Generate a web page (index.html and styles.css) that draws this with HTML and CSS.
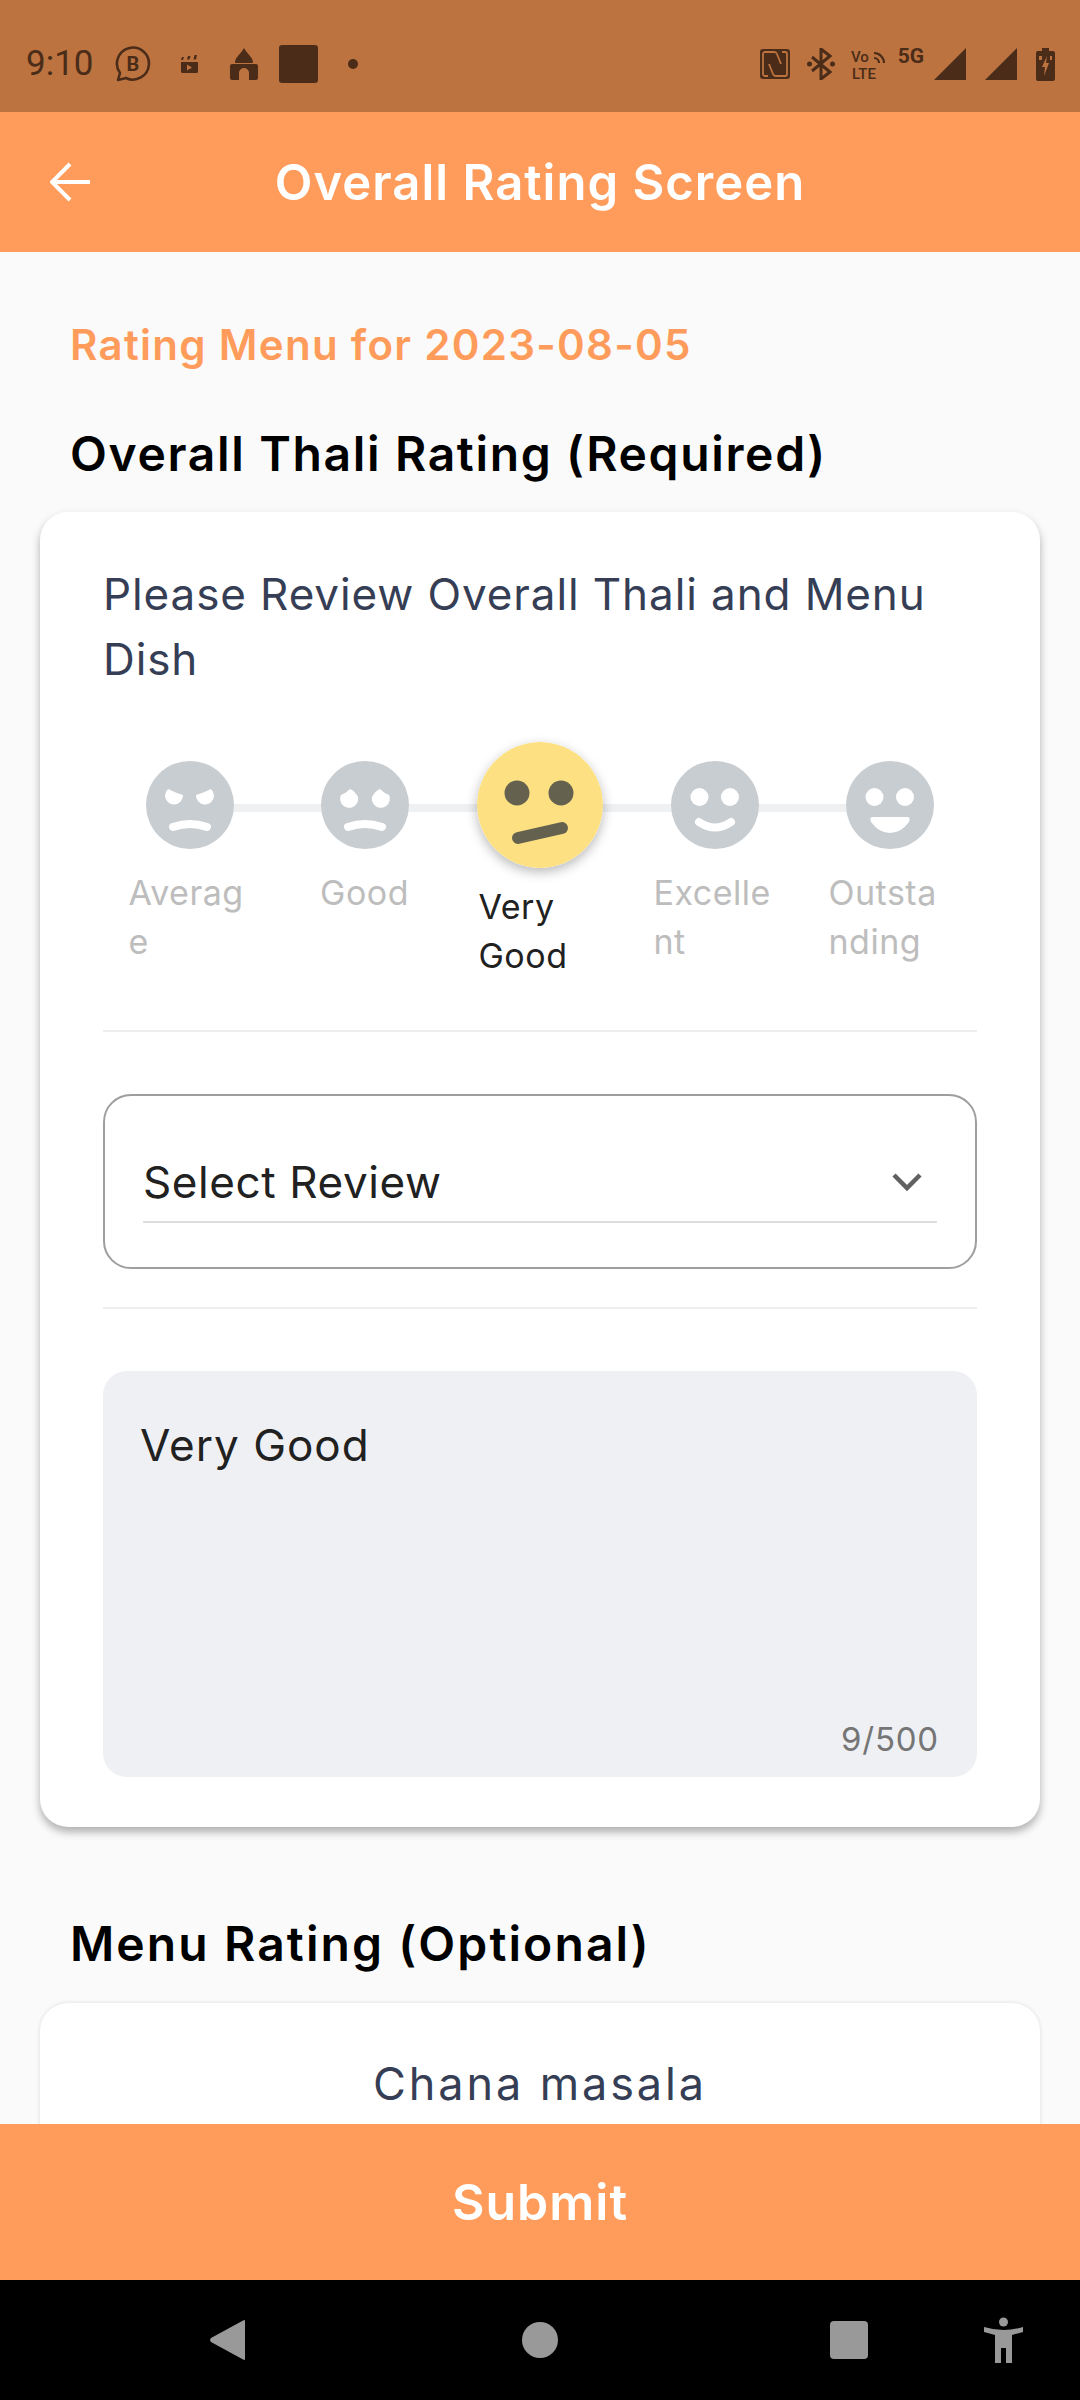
FILE: index.html
```html
<!DOCTYPE html>
<html lang="en">
  <head>
    <meta charset="UTF-8" />
    <meta name="viewport" content="width=device-width, initial-scale=1.0" />
    <title>Overall Rating Screen</title>
    <link rel="stylesheet" href="styles.css">
  </head>
  <body>
    <div class="status-bar">
      <div class="status-left">
        <span class="status-time">9:10</span>
        <svg class="ic-biz" viewBox="0 0 36 36">
          <path d="M3 34l2-7a16 16 0 1 1 6 5z" fill="none" stroke="#4b2c18" stroke-width="2.6" stroke-linejoin="round" />
          <text x="18" y="25" text-anchor="middle" class="ic-biz-text">B</text>
        </svg>
        <svg class="ic-clap" viewBox="0 0 18 18">
          <path d="M1 7h17v9.500a1.500 1.500 0 0 1-1.500 1.500h-14A1.500 1.500 0 0 1 1 16.500z" fill="#4b2c18" />
          <path d="M1 5l1-3h2L3 5zM7 4.500L8 1h2.500L9.500 4.500zM13.500 4.500L14.500 0h2.500L16 4.500z" fill="#4b2c18" />
          <path d="M7 9.500l5 3-5 3z" fill="#bc7340" />
        </svg>
        <svg class="ic-mosque" viewBox="0 0 28 32">
          <path d="M5 15c0-6 5-8 9-15 4 7 9 9 9 15z" fill="#4b2c18" />
          <path fill-rule="evenodd" d="M2 16h24a2 2 0 0 1 2 2v12a2 2 0 0 1-2 2h-7v-7a5 5 0 0 0-10 0v7H2a2 2 0 0 1-2-2V18a2 2 0 0 1 2-2z" fill="#4b2c18" />
        </svg>
        <span class="ic-square"></span>
        <span class="ic-dot"></span>
      </div>
      <div class="status-right">
        <svg class="ic-nfc" viewBox="0 0 30 30">
          <rect width="30" height="30" rx="3" fill="#4b2c18" />
          <path d="M8 27H5a2 2 0 0 1-2-2V5a2 2 0 0 1 2-2h9a3 3 0 0 1 3 2l4 10M22 3h3a2 2 0 0 1 2 2v20a2 2 0 0 1-2 2h-9a3 3 0 0 1-3-2L9 15" fill="none" stroke="#bc7340" stroke-width="1.800" />
        </svg>
        <svg class="ic-bt" viewBox="0 0 28 32">
          <path d="M5 9l18 15-9 7V1l9 7L5 23" fill="none" stroke="#4b2c18" stroke-width="3" />
          <circle cx="2.500" cy="16" r="2.500" fill="#4b2c18" />
          <circle cx="25.500" cy="16" r="2.500" fill="#4b2c18" />
        </svg>
        <svg class="ic-volte" viewBox="0 -3 35 38">
          <text x="0" y="14" class="ic-volte-text">Vo</text>
          <text x="1" y="31" class="ic-volte-text">LTE</text>
          <path d="M23 5a10 10 0 0 1 10 10M23 10a5 5 0 0 1 5 5" fill="none" stroke="#4b2c18" stroke-width="2.200" />
        </svg>
        <span class="status-5g">5G</span>
        <svg class="ic-signal" viewBox="0 0 32 32"><path d="M32 0v32H0z" fill="#4b2c18" /></svg>
        <svg class="ic-signal ic-signal-two" viewBox="0 0 32 32"><path d="M32 0v32H0z" fill="#4b2c18" /></svg>
        <svg class="ic-battery" viewBox="0 0 19 33">
          <path d="M6 0h7v3h4a2 2 0 0 1 2 2v26a2 2 0 0 1-2 2H2a2 2 0 0 1-2-2V5a2 2 0 0 1 2-2h4z" fill="#4b2c18" />
          <path d="M11 8l-5 11h3l-1 9 5-13h-3zM3 8h3v4H3zM14 8h2v4h-2z" fill="#bc7340" />
        </svg>
      </div>
    </div>

    <header class="app-bar">
      <svg class="back-arrow" viewBox="0 0 40 40">
        <path d="M40 20H3M20 2L2 20l18 18" fill="none" stroke="#fff" stroke-width="4" />
      </svg>
      <h1 class="app-title">Overall Rating Screen</h1>
    </header>

    <main class="content">
      <p class="menu-date">Rating Menu for 2023-08-05</p>
      <h2 class="section-title">Overall Thali Rating (Required)</h2>

      <section class="card">
        <p class="card-question">Please Review Overall Thali and Menu Dish</p>

        <div class="rating-row">
          <div class="rating-item">
            <div class="face-slot">
              <svg class="face" viewBox="0 0 88 88">
                <circle cx="44" cy="44" r="44" fill="#c8cdd1" />
                <path d="M22 28q8 4 15 6a9 9 0 1 1-18 1q0-4 3-7zM65 28q-8 4-15 6a9 9 0 1 0 18 1q0-4-3-7z" fill="#fff" />
                <path d="M27 66q17-6 34 0" fill="none" stroke="#fff" stroke-width="8" stroke-linecap="round" />
              </svg>
            </div>
            <span class="rating-label">Averag<br />e</span>
          </div>
          <div class="rating-item">
            <div class="face-slot">
              <svg class="face" viewBox="0 0 88 88">
                <circle cx="44" cy="44" r="44" fill="#c8cdd1" />
                <path d="M20 34q5-2 9-6 4 1 8 8a9 9 0 1 1-17-2zM68 34q-5-2-9-6-4 1-8 8a9 9 0 1 0 17-2z" fill="#fff" />
                <path d="M27 66q17-6 34 0" fill="none" stroke="#fff" stroke-width="8" stroke-linecap="round" />
              </svg>
            </div>
            <span class="rating-label rating-label-center">Good</span>
          </div>
          <div class="rating-item">
            <div class="face-slot">
              <svg class="face face-active" viewBox="0 0 126 126">
                <circle cx="63" cy="63" r="63" fill="#fde082" />
                <circle cx="40" cy="51" r="12.500" fill="#64624f" />
                <circle cx="84" cy="51" r="12.500" fill="#64624f" />
                <path d="M41 96l44-10" fill="none" stroke="#64624f" stroke-width="12" stroke-linecap="round" />
              </svg>
            </div>
            <span class="rating-label rating-label-active">Very<br />Good</span>
          </div>
          <div class="rating-item">
            <div class="face-slot">
              <svg class="face" viewBox="0 0 88 88">
                <circle cx="44" cy="44" r="44" fill="#c8cdd1" />
                <circle cx="28.500" cy="36" r="9" fill="#fff" />
                <circle cx="59" cy="36" r="9" fill="#fff" />
                <path d="M28 61q16 11 32 0" fill="none" stroke="#fff" stroke-width="8" stroke-linecap="round" />
              </svg>
            </div>
            <span class="rating-label">Excelle<br />nt</span>
          </div>
          <div class="rating-item">
            <div class="face-slot">
              <svg class="face" viewBox="0 0 88 88">
                <circle cx="44" cy="44" r="44" fill="#c8cdd1" />
                <circle cx="28.500" cy="36" r="9" fill="#fff" />
                <circle cx="59" cy="36" r="9" fill="#fff" />
                <path d="M27 56h34q4 0 2 5-8 11-19 11t-19-11q-2-5 2-5z" fill="#fff" />
              </svg>
            </div>
            <span class="rating-label">Outsta<br />nding</span>
          </div>
        </div>

        <hr class="divider" />

        <div class="select-box">
          <div class="select-inner">
            <span>Select Review</span>
            <svg class="chevron" viewBox="0 0 30 20">
              <path d="M2 3l13 13L28 3" fill="none" stroke="#616161" stroke-width="4.500" />
            </svg>
          </div>
        </div>

        <hr class="divider divider-lower" />

        <div class="review-box">
          <p class="review-text">Very Good</p>
          <span class="review-count">9/500</span>
        </div>
      </section>

      <h2 class="section-title section-title-menu">Menu Rating (Optional)</h2>

      <section class="card card-menu">
        <p class="dish-name">Chana masala</p>
      </section>
    </main>

    <button type="button" class="submit-btn">Submit</button>

    <nav class="nav-bar">
      <svg class="nav-back" viewBox="0 0 35 40"><path d="M34 0a1 1 0 0 1 1 1v38a1 1 0 0 1-1 1L1 22a3 3 0 0 1 0-4z" fill="#999" /></svg>
      <span class="nav-home"></span>
      <span class="nav-recent"></span>
      <svg class="nav-access" viewBox="0 0 39 46">
        <circle cx="19.500" cy="5" r="4.500" fill="#999" />
        <path d="M0 10q10 3 19.500 3T39 10l0 5-11 3v28h-6V31h-5v15h-6V18L0 15z" fill="#999" />
      </svg>
    </nav>
  </body>
</html>
```

FILE: styles.css
```css
* {
  box-sizing: border-box;
}

html,
body {
  height: 100%;
}

body {
  margin: 0;
  display: flex;
  flex-direction: column;
  background: #fafafa;
  font-family: Inter, "Noto Sans", sans-serif;
  overflow: hidden;
}

p,
h1,
h2 {
  margin: 0;
}

/* status bar */
.status-bar {
  height: 112px;
  flex-shrink: 0;
  display: flex;
  justify-content: space-between;
  align-items: center;
  padding: 16px 25px 0 26px;
  background: #bc7340;
}

.status-left,
.status-right {
  display: flex;
  align-items: center;
}

.status-time {
  font-family: Roboto, sans-serif;
  font-size: 35px;
  line-height: 40px;
  white-space: nowrap;
  color: #4b2c18;
}

.ic-biz {
  width: 36px;
  height: 36px;
  margin-left: 21px;
}

.ic-biz-text {
  font-family: Roboto, sans-serif;
  font-size: 20px;
  font-weight: 700;
  fill: #4b2c18;
}

.ic-clap {
  width: 18px;
  height: 18px;
  margin-left: 29px;
}

.ic-mosque {
  width: 28px;
  height: 32px;
  margin-left: 32px;
}

.ic-square {
  width: 39px;
  height: 38px;
  margin-left: 21px;
  border-radius: 3px;
  background: #4b2c18;
}

.ic-dot {
  width: 10px;
  height: 10px;
  margin-left: 30px;
  border-radius: 50%;
  background: #4b2c18;
}

.ic-nfc {
  width: 30px;
  height: 30px;
}

.ic-bt {
  width: 28px;
  height: 32px;
  margin-left: 17px;
}

.ic-volte {
  width: 35px;
  height: 38px;
  margin-left: 16px;
}

.ic-volte-text {
  font-family: Roboto, sans-serif;
  font-size: 15px;
  font-weight: 500;
  fill: #4b2c18;
}

.status-5g {
  margin-left: 12px;
  margin-bottom: 16px;
  font-family: Roboto, sans-serif;
  font-size: 21px;
  font-weight: 700;
  line-height: 24px;
  white-space: nowrap;
  color: #4b2c18;
}

.ic-signal {
  width: 32px;
  height: 32px;
  margin-left: 10px;
}

.ic-signal-two {
  margin-left: 19px;
}

.ic-battery {
  width: 19px;
  height: 33px;
  margin-left: 19px;
}

/* app bar */
.app-bar {
  height: 140px;
  flex-shrink: 0;
  position: relative;
  display: flex;
  align-items: center;
  justify-content: center;
  background: #ff9c5b;
}

.back-arrow {
  position: absolute;
  left: 50px;
  top: 50px;
  width: 40px;
  height: 40px;
}

.app-title {
  font-size: 49px;
  font-weight: 600;
  letter-spacing: 1px;
  color: #fff;
}

/* scrolling area */
.content {
  flex: 1;
  min-height: 0;
  overflow: hidden;
  padding: 66px 40px 0;
}

.menu-date {
  padding-left: 30px;
  font-size: 42px;
  line-height: 54px;
  font-weight: 600;
  letter-spacing: 1.3px;
  color: #ff9c5b;
}

.section-title {
  margin-top: 52px;
  padding-left: 30px;
  font-size: 48px;
  line-height: 60px;
  font-weight: 600;
  letter-spacing: 1.65px;
  color: #000;
}

.section-title-menu {
  margin-top: 87px;
  letter-spacing: 2.1px;
}

.card {
  margin-top: 28px;
  padding: 50px 63px 50px;
  border-radius: 28px;
  background: #fff;
  box-shadow: 0 5px 8px rgba(0, 0, 0, 0.3);
}

.card-menu {
  margin-top: 29px;
  padding: 50px 63px 200px;
  box-shadow: 0 0 4px rgba(0, 0, 0, 0.12);
}

.card-question {
  font-size: 44px;
  line-height: 65px;
  letter-spacing: 0.9px;
  color: #353e55;
}

.dish-name {
  font-size: 45px;
  line-height: 62px;
  letter-spacing: 2.9px;
  text-align: center;
  color: #353e55;
}

/* smiley rating */
.rating-row {
  position: relative;
  display: flex;
  margin: 50px 0 0 -1px;
}

.rating-row::before {
  content: "";
  position: absolute;
  left: 88px;
  right: 88px;
  top: 62px;
  height: 8px;
  background: #eff0f2;
}

.rating-item {
  position: relative;
  width: 175px;
  display: flex;
  flex-direction: column;
  align-items: center;
}

.face-slot {
  height: 126px;
  display: flex;
  align-items: center;
}

.face {
  display: block;
  width: 88px;
  height: 88px;
}

.face-active {
  width: 126px;
  height: 126px;
  border-radius: 50%;
  box-shadow: 0 4px 12px rgba(0, 0, 0, 0.28);
}

.rating-label {
  width: 122px;
  height: 100px;
  font-size: 34px;
  line-height: 49px;
  letter-spacing: 0.5px;
  color: #bdbdbd;
}

.rating-label-center {
  text-align: center;
}

.rating-label-active {
  margin-top: 14px;
  height: 98px;
  color: #212121;
}

.divider {
  margin: 0;
  border: none;
  border-top: 2px solid #eee;
}

.rating-row + .divider {
  margin-top: 50px;
}

.divider-lower {
  margin-top: 38px;
}

/* review dropdown */
.select-box {
  height: 175px;
  margin-top: 62px;
  padding: 0 38px;
  border: 2px solid #9e9e9e;
  border-radius: 28px;
}

.select-inner {
  height: 127px;
  display: flex;
  justify-content: space-between;
  align-items: center;
  padding: 46px 15px 0 0;
  border-bottom: 2px solid #ddd;
  font-size: 44px;
  letter-spacing: 0.6px;
  color: #212121;
}

.chevron {
  width: 30px;
  height: 20px;
}

/* review text */
.review-box {
  position: relative;
  height: 406px;
  margin-top: 62px;
  padding: 44px 37px;
  border-radius: 24px;
  background: #eff0f4;
}

.review-text {
  font-size: 44px;
  line-height: 60px;
  letter-spacing: 1px;
  color: #212121;
}

.review-count {
  position: absolute;
  right: 38px;
  bottom: 18px;
  font-size: 33px;
  line-height: 40px;
  letter-spacing: 0.8px;
  color: #757575;
}

/* bottom */
.submit-btn {
  height: 156px;
  flex-shrink: 0;
  display: block;
  width: 100%;
  border: none;
  padding: 0;
  background: #ff9c5b;
  color: #fff;
  font-family: inherit;
  font-size: 50px;
  font-weight: 600;
  letter-spacing: 1px;
}

.nav-bar {
  height: 120px;
  flex-shrink: 0;
  position: relative;
  display: flex;
  align-items: center;
  background: #000;
}

.nav-back {
  width: 35px;
  height: 40px;
  margin-left: 210px;
}

.nav-home {
  width: 36px;
  height: 36px;
  margin-left: 277px;
  border-radius: 50%;
  background: #999;
}

.nav-recent {
  width: 38px;
  height: 38px;
  margin-left: 272px;
  border-radius: 4px;
  background: #999;
}

.nav-access {
  width: 39px;
  height: 46px;
  margin-left: 116px;
}
```
